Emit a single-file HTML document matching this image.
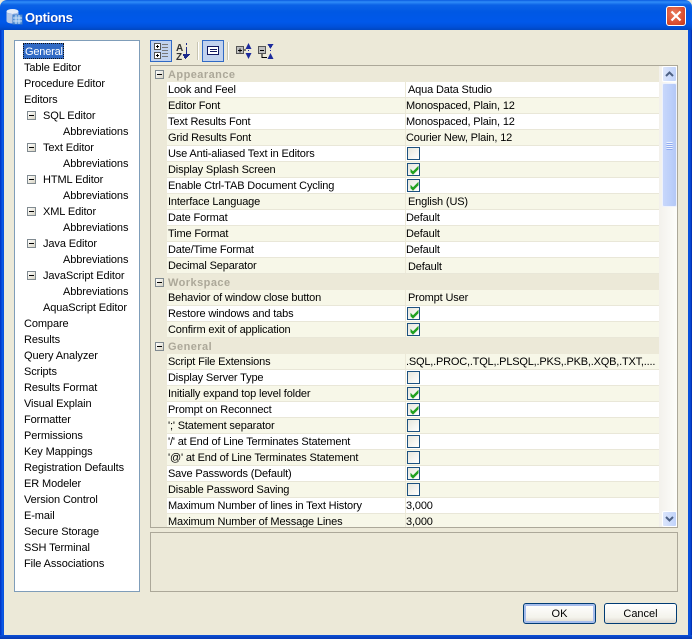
<!DOCTYPE html>
<html><head><meta charset="utf-8">
<style>
html,body{margin:0;padding:0;width:692px;height:639px;overflow:hidden;background:#ece9d8}
*{box-sizing:border-box}
body{font:11px/16px "Liberation Sans",sans-serif;color:#000;position:relative}
.abs{position:absolute}
#tb{left:0;top:0;width:692px;height:30px;background:linear-gradient(180deg,#0a5ae0 0,#2f8cf8 2px,#0b62e6 5px,#0058e4 12px,#0058ea 22px,#0050d8 27px,#0046c0 30px);border-radius:7px 7px 0 0}
#title{left:25px;top:10px;color:#fff;font:bold 13px/16px "Liberation Sans",sans-serif;letter-spacing:-.2px;text-shadow:1px 1px 0 #0a3cb0}
#bl{left:0;top:30px;width:4px;height:609px;background:linear-gradient(90deg,#0030c0,#0a5ae8 60%,#0a50d8)}
#br{left:688px;top:30px;width:4px;height:609px;background:linear-gradient(90deg,#0a50d8,#0850e0 50%,#0028a8)}
#bb{left:0;top:635px;width:692px;height:4px;background:linear-gradient(180deg,#0a50d8,#0838b0)}
#close{left:666px;top:6px;width:20px;height:20px;border:1px solid #fff;border-radius:3px;background:radial-gradient(circle at 40% 35%,#e87a5c,#d8492b 70%,#c03a1c)}
#side{left:14px;top:40px;width:126px;height:552px;background:#fff;border:1px solid #7f9db9;letter-spacing:-.1px}
.it{position:absolute;white-space:nowrap;line-height:18px;height:16px}
.exp{position:absolute;left:12px;width:9px;height:9px;border:1px solid #808a90;background:linear-gradient(135deg,#fff,#d8d4c4)}
.exp:after{content:"";position:absolute;left:1px;top:3px;width:5px;height:1px;background:#000}
#sel{left:8px;top:2px;width:41px;height:16px;background:#316ac5;color:#fff;outline:1px dotted #111;outline-offset:-1px;padding-left:2px;letter-spacing:-.2px;overflow:visible}
.tbtn{width:22px;height:22px;top:40px;background:#c1d2ee;border:1px solid #316ac5}
.sep{top:42px;width:1px;height:18px;background:#c8c5b2;border-right:1px solid #fff}
#tbl{left:150px;top:65px;width:528px;height:463px;border:1px solid #aca899;overflow:hidden;background:#ece9d8}
#rows{position:absolute;left:0;top:0;width:508px}
.h{height:16px;position:relative;font-weight:bold;color:#aca899;padding-left:17px;line-height:18px;letter-spacing:.45px}
.h i{position:absolute;left:4px;top:4px;width:9px;height:9px;border:1px solid #808a90;background:linear-gradient(135deg,#fff,#d8d4c4)}
.h i:after{content:"";position:absolute;left:1px;top:3px;width:5px;height:1px;background:#000}
.r{height:16px;position:relative;margin-left:16px;background:#fff;border-bottom:1px solid #e9e7d8;line-height:17px;padding-left:1px;white-space:nowrap;letter-spacing:-.15px}
.c{background:#f7f7e8}
.r b{font-weight:normal;position:absolute;left:239px;top:0;height:15px}
.r b.x{left:241px}
.r b.y{left:241px;top:1px}
.r:after{content:"";position:absolute;left:238px;top:0;width:1px;height:15px;background:#ece9d8}
.k{position:absolute;left:240px;top:1px;width:13px;height:13px;border:1px solid #1c5180;background:linear-gradient(135deg,#e6e6dd,#fff)}
.k svg{position:absolute;left:1px;top:1px}
#sb{left:508px;top:0;width:19px;height:461px;background:linear-gradient(90deg,#f3f1ec,#fefefb)}
.sbtn{position:absolute;left:3px;width:15px;height:16px;background:linear-gradient(90deg,#dce6fb,#c1d3fb);border:1px solid #fff;border-radius:2px}
#thumb{position:absolute;left:3px;top:17px;width:15px;height:124px;background:linear-gradient(90deg,#c8d7fb,#bccffa 60%,#b4c8f6);border:1px solid #eef2fd;border-radius:2px}
#low{left:150px;top:532px;width:528px;height:60px;border:1px solid #aca899}
.btn{top:603px;height:21px;border:1px solid #003c74;border-radius:3px;background:linear-gradient(180deg,#fff,#f4f3ec 70%,#dcd8ce);text-align:center;line-height:20px}
.ok{box-shadow:inset 0 0 0 2px #a6bdec}
</style></head><body>
<div class="abs" id="tb"></div>
<svg class="abs" style="left:5px;top:8px" width="18" height="18" viewBox="0 0 18 18">
<ellipse cx="7.5" cy="3.5" rx="6" ry="2.5" fill="#e4ecf8"/><path d="M1.500 3.500V13c0 1.500 3 2.500 6 2.500s6-1 6-2.500V3.500c0 1.500-3 2.500-6 2.500s-6-1-6-2.500z" fill="#b4c8e8"/>
<rect x="8" y="7" width="9" height="9" fill="#6aa4e0" stroke="#3c78c8"/><path d="M8 10h9M8 13h9M11 7v9M14 7v9" stroke="#cfe2f8"/>
</svg>
<div class="abs" id="title">Options</div>
<div class="abs" id="close"><svg width="18" height="18" viewBox="0 0 18 18" style="display:block"><path d="M4.500 4.500l9 9M13.500 4.500l-9 9" stroke="#fff" stroke-width="2.200"/></svg></div>
<div class="abs" id="bl"></div><div class="abs" id="br"></div><div class="abs" id="bb"></div>

<div class="abs" id="side">
<div class="it" id="sel">General</div>
<div class="it" style="left:9px;top:18px">Table Editor</div>
<div class="it" style="left:9px;top:34px">Procedure Editor</div>
<div class="it" style="left:9px;top:50px">Editors</div>
<div class="exp" style="top:70px"></div><div class="it" style="left:28px;top:66px">SQL Editor</div>
<div class="it" style="left:48px;top:82px">Abbreviations</div>
<div class="exp" style="top:102px"></div><div class="it" style="left:28px;top:98px">Text Editor</div>
<div class="it" style="left:48px;top:114px">Abbreviations</div>
<div class="exp" style="top:134px"></div><div class="it" style="left:28px;top:130px">HTML Editor</div>
<div class="it" style="left:48px;top:146px">Abbreviations</div>
<div class="exp" style="top:166px"></div><div class="it" style="left:28px;top:162px">XML Editor</div>
<div class="it" style="left:48px;top:178px">Abbreviations</div>
<div class="exp" style="top:198px"></div><div class="it" style="left:28px;top:194px">Java Editor</div>
<div class="it" style="left:48px;top:210px">Abbreviations</div>
<div class="exp" style="top:230px"></div><div class="it" style="left:28px;top:226px">JavaScript Editor</div>
<div class="it" style="left:48px;top:242px">Abbreviations</div>
<div class="it" style="left:28px;top:258px">AquaScript Editor</div>
<div class="it" style="left:9px;top:274px">Compare</div>
<div class="it" style="left:9px;top:290px">Results</div>
<div class="it" style="left:9px;top:306px">Query Analyzer</div>
<div class="it" style="left:9px;top:322px">Scripts</div>
<div class="it" style="left:9px;top:338px">Results Format</div>
<div class="it" style="left:9px;top:354px">Visual Explain</div>
<div class="it" style="left:9px;top:370px">Formatter</div>
<div class="it" style="left:9px;top:386px">Permissions</div>
<div class="it" style="left:9px;top:402px">Key Mappings</div>
<div class="it" style="left:9px;top:418px">Registration Defaults</div>
<div class="it" style="left:9px;top:434px">ER Modeler</div>
<div class="it" style="left:9px;top:450px">Version Control</div>
<div class="it" style="left:9px;top:466px">E-mail</div>
<div class="it" style="left:9px;top:482px">Secure Storage</div>
<div class="it" style="left:9px;top:498px">SSH Terminal</div>
<div class="it" style="left:9px;top:514px">File Associations</div>
</div>

<div class="abs tbtn" style="left:150px"></div>
<svg class="abs" style="left:154px;top:43px" width="16" height="17" viewBox="0 0 16 17" shape-rendering="crispEdges">
<path d="M0.500 0.500h6v6h-6zM0.500 9.500h6v6h-6z" fill="#fff" stroke="#555"/><path d="M2 3.500h3M3.500 2v3M2 12.500h3M3.500 11v3" stroke="#000"/>
<path d="M8 1.500h6M8 4.500h6M8 7.500h6M8 10.500h6M8 13.500h6" stroke="#777"/></svg>
<svg class="abs" style="left:176px;top:43px" width="14" height="18" viewBox="0 0 14 18" shape-rendering="crispEdges">
<text x="0" y="8" font-family="Liberation Sans" font-size="10" font-weight="bold" fill="#333">A</text><text x="0" y="17" font-family="Liberation Sans" font-size="10" font-weight="bold" fill="#333">Z</text>
<path d="M10.500 0v2M10.500 4v8" stroke="#1c2a8c"/><path d="M7 11h7v1h-1v1h-1v1h-1v1h-1v1h-1v-1h-1v-1h0v-1h-1v-1h0z" fill="#1c2a8c"/></svg>
<div class="abs sep" style="left:197px;width:2px"></div>
<div class="abs tbtn" style="left:202px"></div>
<svg class="abs" style="left:207px;top:46px" width="13" height="10" viewBox="0 0 13 10" shape-rendering="crispEdges"><rect x=".5" y=".5" width="11" height="8" fill="#fff" stroke="#101860"/><path d="M3 3.500h7M3 5.500h7" stroke="#101860"/></svg>
<div class="abs sep" style="left:227px;width:2px"></div>
<svg class="abs" style="left:236px;top:43px" width="17" height="17" viewBox="0 0 17 17" shape-rendering="crispEdges">
<rect x=".5" y="3.500" width="7" height="7" fill="#c0c0c0" stroke="#555"/><path d="M2 7.500h4M4 5.500v4M8 7h2" stroke="#000"/>
<polygon points="12.500,0 15.500,6 9.500,6" fill="#1c2a9c"/><polygon points="9.500,10 15.500,10 12.500,16" fill="#1c2a9c"/><path d="M12.500 7v1" stroke="#1c2a9c"/></svg>
<svg class="abs" style="left:258px;top:43px" width="17" height="17" viewBox="0 0 17 17" shape-rendering="crispEdges">
<rect x=".5" y="3.500" width="7" height="7" fill="#c0c0c0" stroke="#555"/><path d="M2 7.500h4" stroke="#000"/><path d="M4 11v3.500H9" stroke="#000" fill="none"/>
<polygon points="9.500,1 15.500,1 12.500,6" fill="#1c2a9c"/><polygon points="12.500,10 15.500,16 9.500,16" fill="#1c2a9c"/><path d="M12.500 7v1" stroke="#1c2a9c"/></svg>

<div class="abs" id="tbl">
<div id="rows">
<div class="h"><i></i>Appearance</div>
<div class="r">Look and Feel<b class="x">Aqua Data Studio</b></div>
<div class="r c">Editor Font<b>Monospaced, Plain, 12</b></div>
<div class="r">Text Results Font<b>Monospaced, Plain, 12</b></div>
<div class="r c">Grid Results Font<b>Courier New, Plain, 12</b></div>
<div class="r">Use Anti-aliased Text in Editors<span class="k"></span></div>
<div class="r c">Display Splash Screen<span class="k"><svg width="11" height="11"><path d="M2 5l2 2 5-5v2l-5 5-2-2z" fill="#21a121" stroke="#21a121" stroke-width="1"/></svg></span></div>
<div class="r">Enable Ctrl-TAB Document Cycling<span class="k"><svg width="11" height="11"><path d="M2 5l2 2 5-5v2l-5 5-2-2z" fill="#21a121" stroke="#21a121" stroke-width="1"/></svg></span></div>
<div class="r c">Interface Language<b class="x">English (US)</b></div>
<div class="r">Date Format<b>Default</b></div>
<div class="r c">Time Format<b>Default</b></div>
<div class="r">Date/Time Format<b>Default</b></div>
<div class="r c">Decimal Separator<b class="y">Default</b></div>
<div class="h"><i></i>Workspace</div>
<div class="r c">Behavior of window close button<b class="x">Prompt User</b></div>
<div class="r">Restore windows and tabs<span class="k"><svg width="11" height="11"><path d="M2 5l2 2 5-5v2l-5 5-2-2z" fill="#21a121" stroke="#21a121" stroke-width="1"/></svg></span></div>
<div class="r c">Confirm exit of application<span class="k"><svg width="11" height="11"><path d="M2 5l2 2 5-5v2l-5 5-2-2z" fill="#21a121" stroke="#21a121" stroke-width="1"/></svg></span></div>
<div class="h"><i></i>General</div>
<div class="r c">Script File Extensions<b style="letter-spacing:-.2px">.SQL,.PROC,.TQL,.PLSQL,.PKS,.PKB,.XQB,.TXT,....</b></div>
<div class="r">Display Server Type<span class="k"></span></div>
<div class="r c">Initially expand top level folder<span class="k"><svg width="11" height="11"><path d="M2 5l2 2 5-5v2l-5 5-2-2z" fill="#21a121" stroke="#21a121" stroke-width="1"/></svg></span></div>
<div class="r">Prompt on Reconnect<span class="k"><svg width="11" height="11"><path d="M2 5l2 2 5-5v2l-5 5-2-2z" fill="#21a121" stroke="#21a121" stroke-width="1"/></svg></span></div>
<div class="r c">';' Statement separator<span class="k"></span></div>
<div class="r">'/' at End of Line Terminates Statement<span class="k"></span></div>
<div class="r c">'@' at End of Line Terminates Statement<span class="k"></span></div>
<div class="r">Save Passwords (Default)<span class="k"><svg width="11" height="11"><path d="M2 5l2 2 5-5v2l-5 5-2-2z" fill="#21a121" stroke="#21a121" stroke-width="1"/></svg></span></div>
<div class="r c">Disable Password Saving<span class="k"></span></div>
<div class="r">Maximum Number of lines in Text History<b>3,000</b></div>
<div class="r c">Maximum Number of Message Lines<b>3,000</b></div>
</div>
<div class="abs" id="sb">
<div class="sbtn" style="top:0"><svg width="13" height="14" style="display:block"><path d="M3 9l3.500-3.500 3.500 3.500" fill="none" stroke="#4d6185" stroke-width="2"/></svg></div>
<div id="thumb"><svg width="13" height="122" style="display:block" shape-rendering="crispEdges"><path d="M3.500 58.500h6M3.500 60.500h6M3.500 62.500h6M3.500 64.500h6" stroke="#eef3fe"/><path d="M3.500 59.500h6M3.500 61.500h6M3.500 63.500h6M3.500 65.500h6" stroke="#8faaf0"/></svg></div>
<div class="sbtn" style="top:445px"><svg width="13" height="14" style="display:block"><path d="M3 5l3.500 3.500 3.500-3.500" fill="none" stroke="#4d6185" stroke-width="2"/></svg></div>
</div>
</div>

<div class="abs" id="low"></div>
<div class="abs btn ok" style="left:523px;width:73px">OK</div>
<div class="abs btn" style="left:604px;width:73px">Cancel</div>
</body></html>
